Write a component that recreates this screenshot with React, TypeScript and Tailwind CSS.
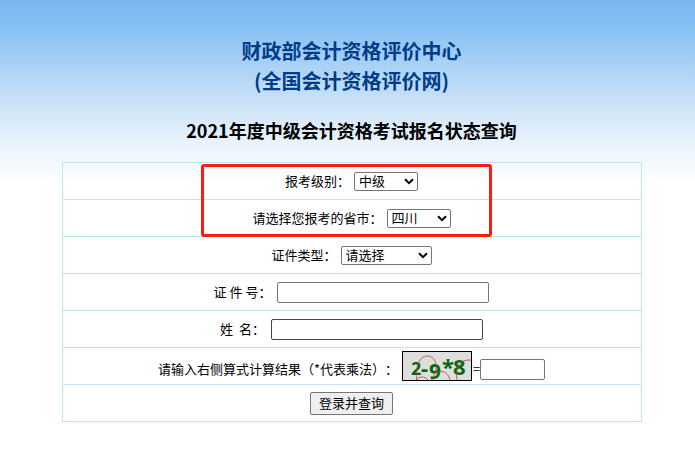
// StatusQuery.tsx
import { useState } from "react";
import type { FormEvent, ReactNode, SelectHTMLAttributes } from "react";

const inputClass = "h-[21px] rounded-[2px] border bg-white px-1 text-[13px]";

function Row({ children }: { children: ReactNode }) {
  return (
    <div className="flex h-[37px] items-center justify-center border-b border-[#bfe4f2] whitespace-pre">
      {children}
    </div>
  );
}

function Select({ className, ...props }: SelectHTMLAttributes<HTMLSelectElement>) {
  return (
    <span className={`relative ml-1 flex ${className}`}>
      <select
        {...props}
        className="h-[19px] w-full appearance-none rounded-[2px] border border-[#767676] bg-white pb-0.5 pl-1 text-[13px] leading-[15px] text-black"
      />
      <svg
        width="10"
        height="7"
        viewBox="0 0 10 7"
        className="pointer-events-none absolute top-1.5 right-1"
        aria-hidden="true"
      >
        <path d="M1 1.2L5 5.2L9 1.2" fill="none" stroke="#000" strokeWidth="2" />
      </svg>
    </span>
  );
}

function Captcha() {
  return (
    <svg
      width="70"
      height="30"
      viewBox="0 0 70 30"
      role="img"
      aria-label="2-9*8"
      className="mx-px overflow-visible"
    >
      <rect x="0.5" y="0.5" width="69" height="29" fill="#dedede" stroke="#000" />
      <g fill="#06690f" fontFamily="'Noto Sans', 'Open Sans', sans-serif" fontWeight="700">
        <text x="9" y="24" fontSize="18">2</text>
        <text x="19" y="25" fontSize="22">-</text>
        <text x="27" y="28" fontSize="21">9</text>
        <text x="40" y="24" fontSize="22">*</text>
        <text x="51" y="24" fontSize="22">8</text>
      </g>
      <g fill="none" stroke="#b5412f" strokeWidth="0.8">
        <path d="M15 29C13 17 17 5 25 5s11 8 8 17" />
        <path d="M14 29c3-4 9-4 12 0" />
        <path d="M30 29c2-11 15-12 18 0" />
        <path d="M55 29c-2-12 2-21 14-20" />
      </g>
    </svg>
  );
}

export default function App() {
  const [level, setLevel] = useState("中级");
  const [province, setProvince] = useState("四川");
  const [idType, setIdType] = useState("");

  const handleSubmit = (e: FormEvent) => {
    e.preventDefault();
  };

  return (
    <div className="min-h-screen bg-white bg-[linear-gradient(#7ab8f2_0px,#82bdf3_20px,#a5cff6_60px,#c8e1f8_100px,#eaf4fd_145px,#ffffff_185px)] bg-no-repeat pt-9 pr-1 pb-12 pl-3 font-['Noto_Sans_CJK_SC',sans-serif] text-[13px] text-black [text-spacing-trim:space-all]">
      {/* Titles */}
      <header className="text-center font-bold">
        <h1 className="text-xl leading-[30px] text-[#003d88]">
          财政部会计资格评价中心
          <br />
          (全国会计资格评价网)
        </h1>
        <h2 className="mt-5 text-lg leading-7">2021年度中级会计资格考试报名状态查询</h2>
      </header>

      {/* Query form */}
      <form
        onSubmit={handleSubmit}
        className="relative mx-auto mt-[18px] w-full max-w-[580px] border-x border-t border-[#bfe4f2]"
      >
        <Row>
          <label htmlFor="level">报考级别：</label>
          <Select
            id="level"
            value={level}
            onChange={(e) => setLevel(e.target.value)}
            className="w-16"
          >
            <option>初级</option>
            <option>中级</option>
            <option>高级</option>
          </Select>
        </Row>
        <Row>
          <label htmlFor="province">请选择您报考的省市：</label>
          <Select
            id="province"
            value={province}
            onChange={(e) => setProvince(e.target.value)}
            className="w-16"
          >
            <option>北京</option>
            <option>四川</option>
          </Select>
        </Row>
        <Row>
          <label htmlFor="idType">证件类型：</label>
          <Select
            id="idType"
            value={idType}
            onChange={(e) => setIdType(e.target.value)}
            className="w-[91px]"
          >
            <option value="">请选择</option>
            <option value="1">居民身份证</option>
          </Select>
        </Row>
        <Row>
          <label htmlFor="idNo">证 件 号：</label>
          <input id="idNo" type="text" className={`${inputClass} ml-1.5 w-[212px] border-[#767676]`} />
        </Row>
        <Row>
          <label htmlFor="name">姓  名：</label>
          <input id="name" type="text" className={`${inputClass} ml-1.5 w-[212px] border-[#454545]`} />
        </Row>
        <Row>
          <label htmlFor="answer" className="mt-1.5">请输入右侧算式计算结果（*代表乘法）： </label>
          <Captcha />
          <span className="mt-1.5">=</span>
          <input id="answer" type="text" className={`${inputClass} mt-1.5 w-[65px] border-[#767676]`} />
        </Row>
        <Row>
          <button
            type="submit"
            className="h-[23px] rounded-[2px] border border-[#767676] bg-[#efefef] px-2 leading-5"
          >
            登录并查询
          </button>
        </Row>

        {/* Highlight around the first two rows */}
        <div className="pointer-events-none absolute top-px left-1/2 h-[73px] w-[291px] -translate-x-[151px] rounded-[3px] border-3 border-[#fb1c14]" />
      </form>
    </div>
  );
}
